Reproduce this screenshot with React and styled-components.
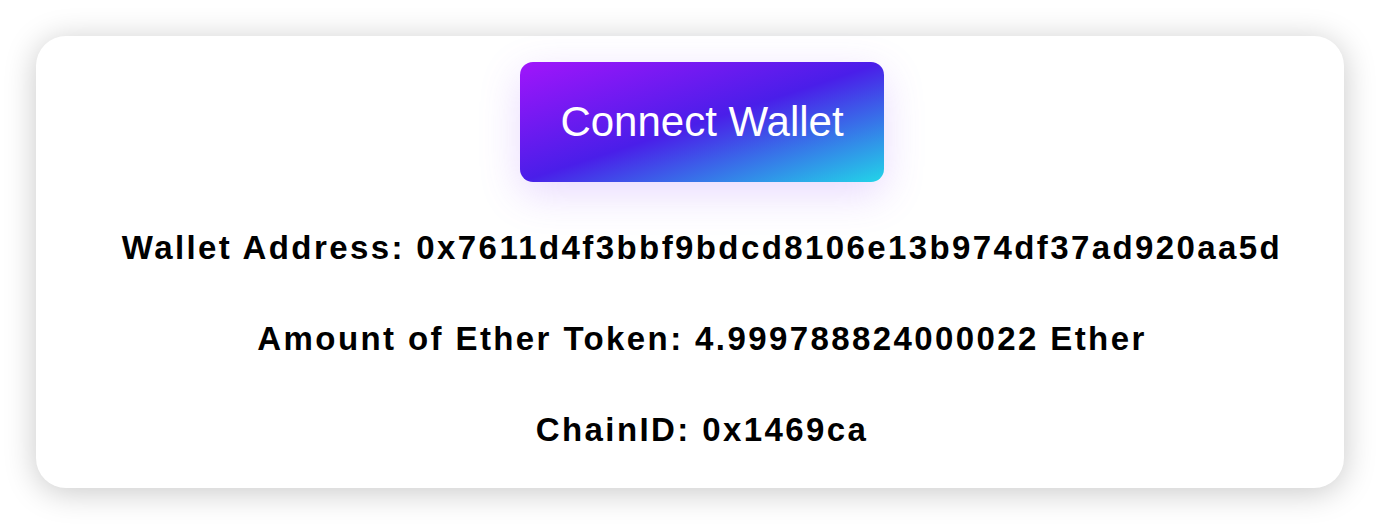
import React from 'react'
import styled, { createGlobalStyle } from 'styled-components'

const GlobalStyle = createGlobalStyle`
body{
    margin: 0;
    background: #ffffff;
    font-family: "Liberation Sans", Arial, sans-serif;
}
`;

const App = () => {
    return(
        <Page>
            <GlobalStyle />
            <Card>
                <ConnectButton>Connect Wallet</ConnectButton>
                <Info>
                    <Line>Wallet Address: 0x7611d4f3bbf9bdcd8106e13b974df37ad920aa5d</Line>
                    <Line>Amount of Ether Token: 4.999788824000022 Ether</Line>
                    <Line>ChainID: 0x1469ca</Line>
                </Info>
            </Card>
        </Page>
    )
}

//styled components
const Page = styled.div`
padding: 36px;
`;
const Card = styled.div`
display: flex;
flex-direction: column;
align-items: center;
padding: 26px 0 38px 24px;
background: #ffffff;
border-radius: 30px;
box-shadow: 0 4px 32px rgba(0, 0, 0, 0.22);
`;
const ConnectButton = styled.button`
width: 364px;
height: 120px;
border: none;
border-radius: 13px;
background: linear-gradient(to bottom right, #a115fb 0%, #4a1ee9 50%, #22d5e8 100%);
box-shadow: 0 12px 40px rgba(150, 80, 250, 0.22);
color: #ffffff;
font-family: "Liberation Sans", Arial, sans-serif;
font-size: 42px;
cursor: pointer;
`;
const Info = styled.div`
display: flex;
flex-direction: column;
align-items: center;
gap: 51px;
margin-top: 46px;
`;
const Line = styled.div`
font-size: 33px;
line-height: 40px;
font-weight: bold;
letter-spacing: 2.4px;
color: #000000;
`;

export default App;
